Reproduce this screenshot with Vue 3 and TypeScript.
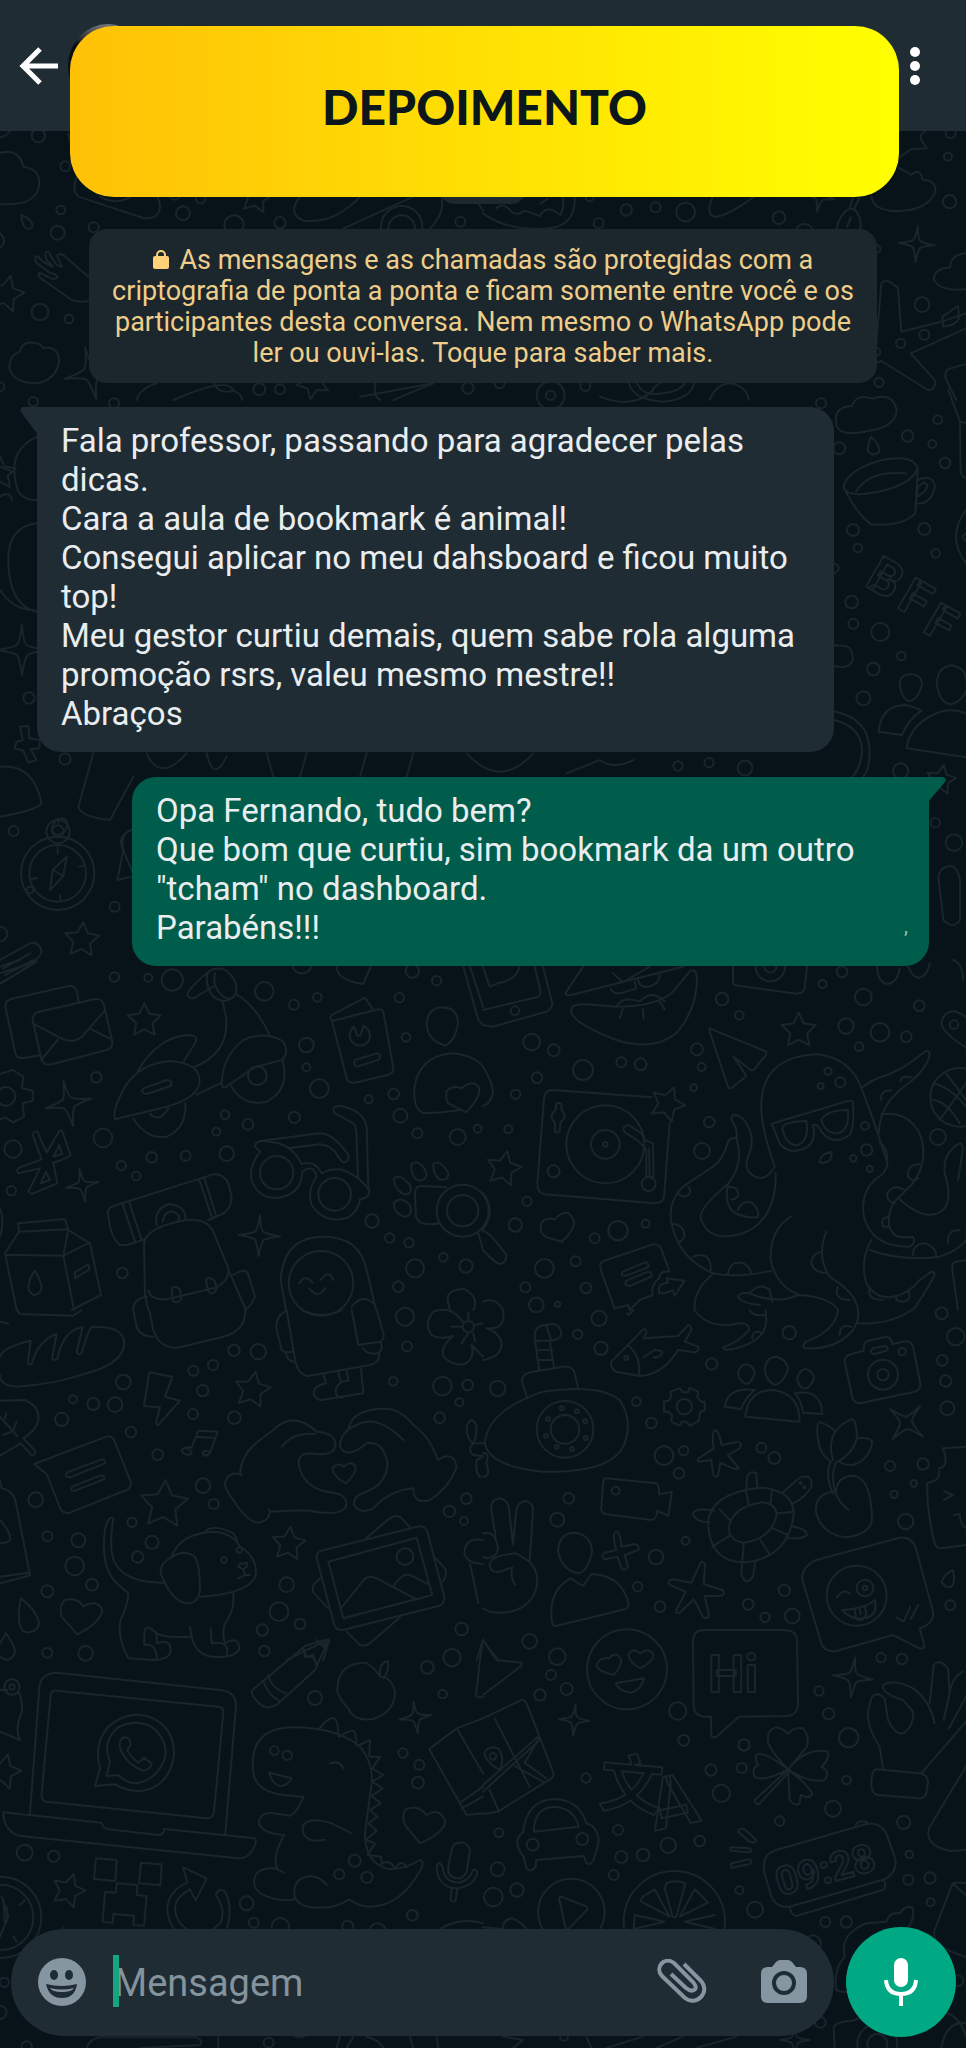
<script setup lang="ts">
import { ref } from 'vue'

type Dot = [x: number, y: number, r: number]
type Turned = [x: number, y: number, r: number, angle: number]
type Word = { t: string; x: number; y: number; size: number; turn: number }

interface Tile {
  x: number
  y: number
  dots: Dot[]
  stars: Turned[]
  sparks: Turned[]
  paths: string[]
  words: Word[]
}

const draft = ref('')

const incoming = [
  'Fala professor, passando para agradecer pelas dicas.',
  'Cara a aula de bookmark é animal!',
  'Consegui aplicar no meu dahsboard e ficou muito top!',
  'Meu gestor curtiu demais, quem sabe rola alguma promoção rsrs, valeu mesmo mestre!!',
  'Abraços',
]

const outgoing = [
  'Opa Fernando, tudo bem?',
  'Que bom que curtiu, sim bookmark da um outro "tcham" no dashboard.',
  'Parabéns!!!',
]

const star = 'M0 -100L29 -40L95 -31L47 15L59 81L0 50L-59 81L-47 15L-95 -31L-29 -40Z'
const spark = 'M0 -100Q6 -20 22 -18Q40 -8 100 0Q36 10 22 20Q10 36 0 100Q-10 36 -20 20Q-36 8 -100 0Q-36 -10 -20 -20Q-8 -36 0 -100Z'

// Wallpaper tiles: each one is drawn in thirds of a page unit from its own corner.
const tiles: Tile[] = [
  {
    x: 0, y: 0,
    dots: [[115, 407, 20], [196, 499, 15], [182, 630, 13], [173, 698, 21], [281, 682, 15], [549, 640, 21], [702, 675, 29], [840, 668, 17], [1381, 665, 15], [120, 936, 25], [207, 957, 13], [778, 1168, 18], [840, 1168, 15], [1404, 1164, 17], [0, 1160, 13], [1205, 680, 62], [1205, 686, 40], [602, 596, 14], [525, 585, 14]],
    stars: [[768, 592, 50, 10], [18, 882, 56, 14], [940, 1148, 50, 190]],
    sparks: [[272, 1120, 80, -12]],
    paths: [
      'M0 612Q118 620 118 545Q115 505 70 500Q60 455 20 455L0 458', 'M0 412Q22 408 30 392',
      'M250 500Q205 560 235 590L430 654Q480 660 480 615Q470 560 420 530Z', 'M300 590Q350 620 400 585',
      'M64 645Q100 660 97 680Q85 695 72 678Q66 668 64 645Z', 'M0 700Q25 725 0 742',
      'M265 830L190 765Q170 758 172 772L186 800Q170 805 146 755Q130 750 140 780L160 800Q130 790 112 768Q100 770 110 790L150 818Q190 830 160 838L118 818Q110 830 130 840L215 900Q240 908 265 903',
      'M60 1055Q65 1025 98 1028Q125 1030 130 1045Q170 1035 178 1080Q170 1140 110 1150Q40 1150 28 1105Q28 1065 60 1055Z',
      'M900 590Q860 640 910 662Q960 668 1010 645Q1060 615 1080 590', 'M1030 686L1240 590', 'M1290 686Q1335 640 1325 590',
      'M410 1200Q420 1165 470 1150M640 1150Q660 1185 700 1172Q725 1180 726 1200', 'M1125 1150Q1120 1190 1140 1200M1180 1200L1300 1150',
      'M205 400Q208 420 211 428', 'M1435 610L1449 632',
    ],
    words: [],
  },
  {
    x: 483, y: 0,
    dots: [[1403, 400, 15], [1395, 470, 12], [1400, 605, 20], [430, 630, 17], [518, 622, 15], [608, 636, 28], [347, 670, 15], [888, 653, 19], [964, 700, 28], [1317, 914, 22], [1324, 1004, 15], [1253, 1030, 14], [1188, 1147, 14], [1014, 1210, 15], [307, 1158, 15], [203, 1186, 42], [203, 1186, 14], [50, 1150, 15], [320, 592, 12], [1180, 747, 12], [1180, 1055, 12]],
    stars: [],
    sparks: [[1301, 732, 54, 4], [1010, 590, 46, 10]],
    paths: [
      'M1325 395Q1305 405 1318 425L1332 445L1283 448L1250 472M1250 505Q1280 520 1285 525Q1310 500 1320 540Q1360 540 1357 575Q1330 640 1220 632Q1170 625 1165 590',
      'M0 640Q70 690 170 686Q280 690 275 590', 'M40 625Q60 605 82 632Q100 650 125 632Q150 640 170 648Q190 610 232 645Q245 620 240 592M172 610L195 596',
      'M690 590Q665 640 695 650Q730 650 810 592', 'M1060 690Q1070 640 1100 625Q1135 630 1133 690M1092 680L1104 652M1115 625L1130 590M1100 625L1110 590',
      'M1195 850Q1210 830 1245 865L1255 995L1385 962L1449 940M1195 850L1180 1030M1449 985L1283 1060L1355 1140Q1360 1170 1335 1170L1195 1083L1180 1088',
      'M1380 980L1378 950L1425 918L1428 955Q1420 975 1380 980Z', 'M1449 760Q1400 765 1402 802Q1355 805 1352 838Q1370 875 1449 868',
      'M1449 1092L1400 1106Q1380 1115 1390 1140L1420 1200', 'M438 1150Q450 1200 540 1205Q620 1200 634 1150M462 1150Q480 1190 540 1180Q590 1175 606 1150M510 1165L530 1150',
      'M680 1200Q700 1150 745 1150Q790 1160 798 1200',
    ],
    words: [],
  },
  {
    x: 826, y: 390,
    dots: [[335, 89, 13], [245, 138, 17], [319, 162, 12], [357, 219, 16], [40, 175, 18], [81, 420, 18], [96, 474, 13], [295, 417, 18], [329, 490, 13], [77, 636, 19], [82, 701, 15], [163, 726, 27], [226, 798, 13], [142, 837, 19], [112, 925, 21], [224, 1143, 23], [24, 535, 14]],
    stars: [[345, 1170, 46, 10]],
    sparks: [],
    paths: [
      'M30 95Q25 50 78 48Q90 10 140 26Q200 5 212 60Q210 110 130 122Q30 145 30 95Z', 'M135 140Q165 165 158 188Q140 200 126 184Q124 165 135 140Z',
      'M52 290Q65 240 160 212Q260 190 275 235Q255 290 130 310Q60 320 52 290ZM52 290Q90 370 135 403Q230 410 268 370L275 235M90 304Q130 240 240 250M275 270Q320 250 327 290Q315 345 270 340M275 320Q265 290 295 278Q320 290 275 320',
      'M367 0L402 95L420 98M402 95L404 240Q405 260 420 265', 'M420 360Q360 440 420 520M420 430Q400 440 420 452',
      'M222 890Q218 855 252 852Q290 855 288 885Q275 930 250 933Q230 930 222 890Z', 'M332 880Q335 830 378 826Q420 835 420 870M332 880Q340 940 375 943Q405 935 420 905',
      'M158 1025Q165 945 240 945Q275 955 286 962Q245 990 228 1035ZM420 970Q370 950 320 975Q250 1010 242 1075L420 1102',
      'M24 766L60 768Q80 775 81 808Q70 840 24 828', 'M24 964Q130 985 131 1085Q130 1140 112 1160M24 990Q108 1010 108 1085Q105 1130 80 1160',
    ],
    words: [
      { t: 'B', x: 112, y: 585, size: 150, turn: 30 },
      { t: 'F', x: 208, y: 650, size: 150, turn: 30 },
      { t: 'F', x: 286, y: 722, size: 145, turn: 30 },
    ],
  },
  {
    x: 0, y: 390,
    dots: [[87, 924, 17], [195, 1107, 17], [342, 40, 15], [100, 35, 14], [90, 1500, 10]],
    stars: [[0, 250, 50, 0]],
    sparks: [[66, 780, 75, 0]],
    paths: [
      'M112 140Q20 180 50 290Q60 330 112 330M0 230L38 245M0 320Q30 300 36 330', 'M112 400Q20 410 25 520Q30 650 112 665M0 600Q40 660 100 660',
      'M60 1010L85 1008L88 1045L120 1050L118 1075L92 1078L110 1110L85 1118L70 1082L44 1075L50 1055L68 1050Z',
      'M0 1130Q100 1120 125 1240Q110 1260 0 1280', 'M280 1090L235 1250Q240 1280 330 1290L400 1160',
      'M440 1090Q480 1180 560 1090M620 1090Q640 1180 680 1100M800 1090L820 1160M920 1090L900 1160M1100 1090L1080 1160M1240 1090L1220 1160M1400 1090Q1500 1200 1600 1090M1700 1150L1800 1110Q1840 1140 1900 1110',
      'M700 0Q680 -40 520 30M1080 20L1300 -20M1800 20Q1900 60 1960 0',
      'M420 1500L365 1370Q350 1330 420 1310', 'M175 1300Q175 1285 190 1285Q215 1300 190 1328Q165 1345 155 1320Q160 1295 175 1285',
    ],
    words: [],
  },
  {
    x: 0, y: 760,
    dots: [[41, 213, 15], [344, 440, 15], [0, 522, 22], [173, 340, 110], [173, 340, 85], [174, 215, 35], [174, 213, 17], [2034, 18, 14], [2127, 8, 14], [2235, 24, 22], [2862, 248, 25], [2806, 188, 14]],
    stars: [[246, 540, 54, 4]],
    sparks: [],
    paths: [
      'M200 290L190 348L150 390L158 330ZM158 330L190 348M173 262L173 280M90 358L112 354M238 320L255 316M180 405L182 420',
      'M0 600L90 550Q120 545 125 575Q120 600 20 660L0 670M10 625L90 580M15 645L100 600', 'M395 210Q360 220 370 270L352 360L395 350',
      'M2840 320Q2870 310 2880 360L2880 480Q2860 510 2830 480L2815 350Q2820 325 2840 320Z',
    ],
    words: [],
  },
  {
    x: 0, y: 960,
    dots: [[343, 51, 14], [445, 53, 12], [517, 60, 32], [793, 94, 28], [882, 134, 15], [952, 112, 13], [906, 10, 30], [919, 255, 22], [919, 322, 12], [958, 386, 28], [1106, 418, 12], [1181, 402, 16], [1201, 467, 21], [1252, 520, 15], [1373, 531, 24], [1433, 506, 12], [1198, 113, 14], [1218, 232, 13], [1237, 33, 20], [1310, 62, 14], [289, 352, 16], [309, 534, 28], [39, 567, 26], [455, 592, 16], [364, 617, 14], [409, 648, 13], [557, 587, 15], [680, 581, 22], [649, 515, 12], [675, 464, 13], [744, 493, 16], [883, 472, 17], [34, 692, 14], [367, 939, 16], [1116, 783, 20], [1169, 834, 14], [1227, 848, 14], [1245, 925, 27], [1330, 892, 13], [1398, 918, 20], [1195, 980, 16], [18, 409, 28], [772, 347, 28], [830, 638, 50], [1004, 703, 49], [1388, 752, 78], [1388, 752, 47], [963, 970, 97]],
    stars: [[433, 182, 52, 0]],
    sparks: [[205, 430, 70, -12], [247, 675, 50, -10], [778, 827, 62, 2]],
    paths: [
      'M118 286L72 294Q50 296 46 280L16 140Q16 122 34 117L205 78Q225 75 231 96L236 124', 'M98 180Q98 160 115 156L285 117Q307 115 312 135L337 245Q338 265 320 270L150 314Q128 315 124 296ZM98 190L190 238Q225 250 248 228L314 152M124 300L174 238M270 206L334 238',
      'M0 342L38 330L70 350L66 385L98 392L98 422L68 430L72 470L40 487L15 472L0 478',
      'M412 335Q470 235 560 225Q600 225 585 250L550 305M345 478Q335 450 375 380Q420 310 510 303Q605 310 598 370Q590 415 500 440ZM430 385L500 360Q520 360 512 378L440 402Q420 400 430 385ZM400 475Q440 540 500 530Q560 505 556 430M450 462Q480 490 505 445M590 404L665 368M580 322Q690 280 678 170L668 125M708 102Q770 140 807 222M665 375Q665 290 730 240Q800 210 850 245Q870 280 845 300L790 315Q760 320 730 345L680 380Q668 385 665 375ZM695 380Q730 440 800 425Q870 390 848 302M625 35Q560 90 562 105Q575 125 600 103L640 80M625 35Q610 70 640 110Q680 140 708 100Q715 60 680 32Q650 18 625 35ZM645 40Q635 80 670 110Q690 122 700 112',
      'M995 165L1095 113L1116 145M995 165Q985 180 1000 182L1135 148Q1145 146 1150 155L1180 325Q1180 340 1165 344L1065 368Q1045 370 1040 355L995 180M1062 200Q1040 220 1055 245Q1080 268 1105 245Q1120 215 1090 197L1082 225L1072 228ZM1065 300L1130 280Q1142 280 1140 292L1135 300L1070 320Q1058 315 1065 300Z',
      'M1280 190Q1285 142 1328 142Q1375 145 1374 190Q1365 245 1335 257Q1280 240 1280 190Z', 'M1380 450Q1300 462 1270 458Q1240 450 1243 385Q1255 290 1355 280Q1420 285 1449 320M1385 385Q1360 375 1340 392Q1335 415 1345 430L1398 457Q1440 415 1438 385Q1420 355 1385 385',
      'M112 515L140 578L178 512L186 512L212 585Q205 595 160 608L172 670L95 702L85 695L120 625L55 640Q45 630 60 622L125 598L98 525Q100 512 112 515ZM178 555L160 590L186 582ZM138 635L122 670L150 660Z',
      'M325 765Q320 745 340 738L640 643Q670 640 685 670L695 710Q695 750 660 765L625 780M325 765Q330 830 360 855L380 855L435 838M367 730L405 845M387 725L425 840M597 656L635 770M612 652L648 765M470 795Q460 745 510 732Q560 740 556 780M488 785Q495 750 520 755Q545 765 535 780',
      'M435 1005L432 850Q440 800 560 780Q620 775 640 815L685 925Q690 965 640 985L500 1018Q450 1020 445 990M435 1005L445 1050M690 940L738 1050M700 945Q740 920 745 945L765 1010Q750 1045 738 1045M400 1050Q400 1015 440 1010M515 985Q530 975 540 990L545 1015Q535 1035 518 1022ZM618 960Q630 945 645 965L650 985Q640 1010 625 995Z',
      'M765 560Q765 545 785 542L960 520Q1000 520 1045 585Q1050 605 1030 607Q1020 600 1005 575Q985 555 960 553L865 565M765 560L780 575Q740 630 758 670Q780 715 830 714Q905 705 907 635Q940 610 950 650Q920 690 935 735Q970 790 1040 775Q1075 755 1080 718Q1110 715 1108 690Q1070 640 1020 628Q990 625 965 640Q945 600 905 612Q880 560 830 548L785 542M1105 690L1100 500Q1090 450 1020 437Q990 440 1005 460L1060 490Q1070 500 1070 540L1074 650',
      'M1235 612Q1260 595 1280 640Q1280 665 1250 660Q1230 640 1235 612ZM1300 612Q1320 595 1345 640Q1345 665 1318 658Q1298 640 1300 612ZM1182 655Q1200 640 1230 675Q1240 705 1212 703Q1180 685 1182 655ZM1182 730Q1200 705 1230 735Q1240 770 1212 770Q1180 760 1182 730ZM1245 700Q1245 675 1270 678L1340 682M1245 700L1248 770Q1255 800 1320 790M1435 820L1449 870',
      'M15 880L57 815L54 790L195 777L205 810L270 850L303 1005L215 1050M15 880L50 1050M15 884L190 887L222 1050M57 815L205 808L190 887L265 850M104 932Q85 960 85 985Q92 1005 104 1005Q125 1000 125 980Q120 955 104 932ZM225 937L265 912L268 928L225 955Z',
      'M858 1050L842 960Q850 830 970 830Q1080 830 1100 930L1128 1050M898 970Q915 940 938 968M962 960Q985 925 1000 960M928 985Q955 1020 975 985M1055 1040Q1085 1000 1120 1030',
      'M0 745Q15 780 0 830', 'M1420 1050Q1440 1010 1390 986Q1340 990 1343 1020L1350 1050', 'M0 20L60 0M0 40L90 10M0 72L110 5',
      'M1010 20Q1010 60 1090 72L1112 20M1390 20L1435 180L1449 195M1410 20L1449 140',
    ],
    words: [],
  },
  {
    x: 483, y: 960,
    dots: [[96, 152, 13], [146, 246, 25], [212, 271, 18], [162, 353, 16], [98, 403, 14], [300, 330, 30], [415, 307, 15], [473, 313, 18], [76, 508, 12], [717, 117, 19], [769, 166, 13], [642, 268, 18], [656, 321, 12], [632, 383, 10], [679, 486, 16], [657, 573, 24], [1077, 35, 16], [1019, 72, 12], [1141, 111, 25], [1309, 137, 16], [1089, 198, 23], [1191, 217, 28], [1270, 230, 16], [1128, 260, 13], [1035, 334, 11], [1072, 367, 15], [1013, 378, 9], [1146, 497, 12], [1151, 570, 17], [1111, 595, 10], [1160, 627, 9], [1365, 531, 24], [132, 724, 14], [97, 795, 20], [405, 812, 29], [335, 835, 15], [488, 791, 12], [278, 904, 15], [184, 925, 28], [127, 982, 15], [309, 984, 16], [160, 1035, 22], [224, 1033, 8], [367, 553, 117], [367, 553, 43], [367, 553, 7], [212, 634, 18], [497, 672, 21], [1430, 412, 88], [1413, 194, 13], [862, 20, 44], [862, 20, 18]],
    stars: [[947, 212, 54, 0], [553, 432, 54, 22], [62, 626, 54, 12]],
    sparks: [],
    paths: [
      'M0 20L20 80L45 70Q100 60 110 20M0 150L160 112Q175 108 172 90L155 20M180 20L208 130Q205 150 190 155L30 200L0 195',
      'M300 20L247 100Q250 108 265 105L600 20M390 40L420 66L500 20M383 85Q390 105 420 98L460 85L455 65M465 60Q470 85 500 80Q530 70 530 45',
      'M265 155Q260 130 310 133L400 140Q520 140 570 95L620 35Q640 20 642 60Q640 150 580 220Q510 275 400 240Q270 190 265 155ZM400 140Q420 105 470 125Q510 85 545 125M420 147L410 175M480 148L482 175M530 125L545 148',
      'M750 20L750 70Q750 75 770 78L930 100Q960 105 965 85L972 20M1182 20Q1185 70 1215 72Q1245 65 1250 25M1275 20Q1290 55 1310 53Q1335 45 1340 10M1410 0Q1440 10 1440 60',
      'M680 205L850 275Q852 280 848 286L812 330Q805 333 800 328L752 290L790 348L745 385Q738 387 735 380L680 215Z',
      'M505 412L210 390Q185 390 183 415L163 670Q163 700 185 703L515 730Q540 730 543 710L560 490M220 432Q228 425 235 432L236 450Q255 470 232 487L230 515Q222 520 216 515L216 487Q195 470 218 450ZM425 500Q435 492 445 500L475 520L485 540L510 550L512 650L490 652L490 568L465 542L430 520Q415 510 425 500ZM498 565L500 650',
      'M875 620Q830 490 835 430Q840 290 1000 283Q1090 290 1130 370Q1180 500 1213 610Q1210 640 1180 655Q1130 700 1143 770Q1165 860 1280 860Q1300 850 1290 830Q1260 835 1240 828Q1200 800 1230 730L1290 670Q1340 600 1310 520Q1270 450 1195 463',
      'M1135 385Q1160 360 1220 342Q1270 320 1325 275Q1340 268 1340 285Q1330 330 1270 375Q1190 430 1187 520M1190 550Q1215 560 1213 610M1195 420Q1190 390 1225 392M1252 365Q1255 345 1285 352',
      'M870 490Q860 490 870 500L890 550Q920 590 975 560Q1000 540 990 495Q1005 490 1015 515Q1050 560 1100 525Q1115 500 1110 430Q1110 420 1098 422ZM898 505Q900 485 970 483Q980 540 945 555Q910 560 898 505ZM1015 480Q1030 450 1095 450Q1100 510 1065 520Q1025 520 1015 480ZM1045 575Q1015 580 1008 605Q1025 615 1040 600Q1048 590 1045 575Z',
      'M875 620Q850 665 815 650Q780 630 795 590Q820 540 790 490Q770 460 750 465Q738 475 755 495Q765 520 760 535M760 535Q745 530 735 545Q720 600 690 620L600 680Q560 720 563 770Q575 890 690 940Q760 955 865 932M760 535Q785 610 735 672Q640 750 655 780Q680 850 780 820Q880 780 878 640M735 672Q720 750 770 765Q800 775 825 772M735 680Q770 680 765 710Q755 720 745 718M765 750Q775 720 805 728Q830 745 825 772M585 700Q605 720 620 700Q625 690 615 680M565 792Q600 790 605 825Q600 845 585 845M630 890Q650 880 670 890Q685 905 683 932M735 942Q740 905 775 908Q800 915 805 940',
      'M923 770Q860 810 863 900Q880 980 950 1005M690 942Q630 990 635 1050M1030 815Q1000 890 1040 950Q1120 1000 1125 1050M1015 875Q985 885 985 910Q995 940 1030 938M765 1010Q770 995 800 1000Q880 1035 945 1005Q1040 1010 1065 1050M800 1000Q830 965 860 990L868 1025M765 1010Q775 1030 830 1035M1065 980Q1050 1020 1100 1020',
      'M1165 840Q1130 900 1150 970Q1180 1020 1230 1010Q1280 1000 1310 960L1345 935Q1360 935 1350 955Q1320 1010 1290 1050M1160 870Q1260 905 1370 890Q1430 870 1449 840M1250 718Q1330 790 1380 750Q1410 720 1385 640Q1380 590 1410 565Q1445 530 1438 580L1425 660M1290 885Q1290 850 1330 850Q1360 865 1360 888M1310 612Q1270 615 1275 650Q1290 670 1305 655M1265 690Q1230 670 1213 700Q1210 725 1235 730M1218 770Q1190 775 1200 800L1220 800M1395 850Q1390 810 1430 810M1160 985Q1150 1020 1200 1020M1275 990Q1290 1020 1260 1025Q1235 1025 1240 1010',
      'M1375 190Q1380 155 1415 153L1449 170M1375 190Q1380 220 1449 262M1350 370Q1400 380 1449 440M1345 420Q1390 420 1430 490M1370 480L1449 370M1390 340L1449 420',
      'M215 778Q180 770 173 795Q170 820 190 832L237 845Q275 810 273 785Q255 735 215 778Z',
      'M0 320Q30 370 30 395Q25 430 0 438M0 700Q40 750 0 810M0 815Q15 810 70 885Q70 910 50 912Q30 905 0 870',
      'M352 920Q350 905 370 900L510 853Q530 852 536 870L560 935Q530 930 528 955Q500 980 510 1005L470 1020L440 1050L435 1035L395 1045L355 935ZM420 935L485 907Q500 908 495 922L430 947Q410 948 420 935ZM430 962L495 935Q510 938 505 950L440 978Q420 975 430 962ZM528 985Q530 970 555 968L550 955L605 962L575 1008L570 990Q540 1005 528 998Z',
      'M1449 900L1420 905Q1405 908 1408 930L1425 1050', 'M0 1025Q40 1010 60 1050',
    ],
    words: [],
  },
  {
    x: 0, y: 1310,
    dots: [[370, 216, 22], [219, 268, 12], [280, 282, 18], [345, 284, 22], [185, 328, 20], [393, 366, 16], [473, 434, 16], [107, 569, 22], [702, 121, 17], [775, 125, 23], [639, 165, 15], [580, 182, 15], [608, 242, 17], [579, 312, 15], [703, 323, 19], [1215, 20, 27], [1221, 109, 15], [1180, 214, 13], [1327, 228, 28], [1403, 225, 16], [1378, 277, 12], [1319, 323, 16], [609, 527, 22], [641, 582, 15], [396, 637, 14], [142, 679, 15], [235, 691, 21], [224, 768, 28], [142, 844, 18], [276, 824, 18], [456, 697, 20], [413, 741, 17], [142, 1028, 15], [257, 1030, 22], [860, 824, 22], [837, 905, 28], [900, 942, 16], [787, 960, 17], [793, 1023, 16], [1348, 604, 17], [1399, 566, 16], [1392, 633, 12], [1385, 957, 19], [1356, 1043, 26], [1405, 50, 17], [672, 750, 8], [718, 720, 8], [1215, 740, 25]],
    stars: [[757, 240, 56, 10], [492, 584, 74, 4], [866, 702, 52, 6]],
    sparks: [],
    paths: [
      'M0 140Q10 110 92 92L84 155Q85 168 95 162Q115 90 170 72L156 145Q165 155 172 145Q190 60 248 52L230 125Q235 138 245 130Q265 60 275 52Q370 45 373 100Q370 160 260 190Q150 225 50 230Q0 228 0 195',
      'M50 0L60 12L220 17L245 0M0 35L25 40M400 0L410 50Q420 80 460 80M448 0L460 60Q480 120 540 112L670 80Q740 60 735 0',
      'M860 0L885 150Q895 195 925 198L1110 165Q1140 160 1138 125M855 5Q825 20 830 60L845 120Q855 130 875 125M858 130Q860 150 880 155M905 0Q970 30 1025 0M1055 0L1075 105L1140 95Q1155 85 1150 70L1130 0M1090 115Q1100 135 1135 130Q1150 120 1143 97M970 190L978 220Q935 230 942 255Q950 270 965 270L1090 250L1083 178M1015 183L1022 215L1045 212L1040 183M1022 218Q1000 235 1010 255Q1020 265 1030 262',
      'M1370 15Q1340 -10 1300 5Q1270 40 1295 75Q1320 90 1360 78Q1320 110 1330 140Q1360 170 1395 162Q1425 145 1415 105L1449 140M1355 50L1385 50M1405 10L1405 30M1372 18L1390 36M1405 70L1385 100M1420 70L1425 95M1425 45L1449 40',
      'M448 187L517 200L495 260L540 272L475 345Q465 345 470 330L480 292L432 288Z', 'M0 272L75 270Q120 290 115 330Q110 360 70 385L105 422Q108 438 95 435L62 400L0 437M0 320L52 378M15 325L18 310M40 360L50 335M10 375L35 365',
      'M560 415Q575 420 575 430Q560 440 545 425Q545 410 575 412L595 362L653 365L630 430Q610 445 608 428Q615 418 630 425M588 380L646 384',
      'M102 462L320 380Q335 375 342 390L392 515Q395 535 380 540L210 608Q190 612 182 598L140 492ZM200 488L305 448Q318 448 315 460L210 502Q192 502 200 488ZM217 530L302 496Q318 498 312 508L222 543Q208 542 217 530Z',
      'M720 490Q725 430 780 390L820 360Q880 300 950 365Q1010 370 1006 410Q1000 440 930 430Q885 430 900 480Q920 540 1000 548Q1045 555 1038 590Q1020 620 930 602Q880 600 810 605Q805 635 775 638Q740 635 700 570Q670 530 675 515Q690 480 725 495M845 410Q880 365 945 372M810 605L807 598',
      'M1045 355Q1060 295 1155 296Q1200 295 1240 345Q1290 380 1313 450Q1360 420 1370 470Q1350 530 1290 570Q1240 585 1240 535Q1170 540 1120 595Q1080 615 1062 585Q1060 555 1100 545Q1160 520 1163 460Q1150 390 1100 400Q1040 450 1020 410Q1020 365 1070 345Q1130 310 1210 390',
      'M1032 470Q1010 455 997 475Q1000 500 1038 520Q1070 490 1067 468Q1050 450 1032 470Z',
      'M340 625Q325 615 315 660Q300 770 350 820L385 850Q385 880 362 930Q350 980 385 1045L460 1050M340 625Q325 720 345 760Q380 820 490 818M515 740Q540 670 640 665Q700 670 720 710Q770 740 768 790Q760 850 600 860M615 665Q640 640 700 670Q710 685 710 690M510 745Q550 715 585 740Q600 770 600 830Q600 880 560 880Q515 875 482 790Q480 760 510 745M700 850Q705 900 675 940Q665 970 675 1000Q720 975 717 1020Q700 1040 670 1040Q590 1050 575 980Q500 985 470 970Q430 930 433 980L433 1005Q470 1000 470 1045M470 970L470 1000Q520 985 510 1030Q500 1050 460 1050M570 950L575 980M632 955L635 1000Q690 990 680 1035M715 770Q720 755 732 762Q745 750 740 770L730 778ZM730 778L735 795L715 805M735 795L750 795',
      'M250 890Q235 860 195 870Q175 885 185 920L232 973Q300 940 307 900Q290 865 250 890Z', 'M62 865Q110 900 118 940Q110 970 80 967Q45 960 62 865ZM18 970Q40 1000 45 1020Q45 1045 20 1050L0 1040M18 970L0 1000',
      'M0 510L5 535Q40 540 48 580L90 795Q80 800 0 820M0 800L85 788M0 630Q35 670 30 690Q20 700 0 700',
      'M1100 683L1165 628Q1190 610 1205 625L1228 650M1308 745L1338 780Q1340 800 1328 815M960 805L940 825Q935 840 942 850L985 895M1040 965L1080 1005Q1095 1010 1110 1000L1200 922M950 745Q948 728 965 722L1250 650Q1275 645 1282 665L1333 860Q1333 885 1315 888L1030 960Q1010 962 1003 945ZM985 755L1250 683L1297 855L1030 925ZM1027 890L1095 805Q1110 795 1130 805L1250 868M1180 830Q1210 780 1240 800L1283 822',
      'M860 1050L985 988Q990 990 985 1000L970 1050M910 1015L920 1040L940 1035L945 1050M960 1000L975 1015L982 1000',
      'M1400 350Q1415 310 1430 350Q1430 380 1420 400Q1400 390 1400 350M1420 400Q1400 420 1420 435L1449 438M1449 440L1430 450Q1425 490 1440 500M1449 690Q1395 680 1393 730Q1400 760 1449 762M1410 762L1425 830L1435 880M1449 400L1425 400M1449 990L1430 1050',
    ],
    words: [],
  },
  {
    x: 483, y: 1310,
    dots: [[348, 25, 23], [284, 73, 14], [354, 115, 20], [44, 235, 23], [460, 275, 13], [505, 339, 16], [543, 437, 28], [602, 422, 14], [588, 490, 16], [257, 565, 16], [223, 629, 21], [686, 162, 17], [919, 68, 20], [1376, 10, 18], [1418, 80, 26], [1378, 151, 16], [1388, 213, 17], [1393, 295, 21], [835, 413, 15], [874, 444, 18], [1221, 468, 15], [1320, 462, 17], [1292, 520, 10], [1233, 553, 11], [1268, 634, 23], [608, 692, 12], [519, 741, 22], [464, 830, 14], [531, 890, 16], [796, 883, 16], [846, 922, 14], [904, 841, 17], [928, 918, 22], [1402, 886, 15], [140, 994, 22], [223, 1040, 25], [246, 358, 85], [246, 358, 43], [236, 295, 6], [281, 304, 6], [307, 334, 6], [308, 384, 6], [267, 417, 6], [221, 410, 6], [189, 377, 6], [195, 328, 6], [604, 290, 23], [430, 144, 6], [398, 542, 12], [1200, 194, 45], [1200, 194, 17], [1258, 125, 11], [1121, 857, 90], [1146, 834, 25], [1146, 834, 7], [953, 520, 3], [964, 532, 3]],
    stars: [],
    sparks: [[1270, 338, 64, 40]],
    paths: [
      'M5 400Q15 300 180 245Q350 220 410 270Q450 330 425 400Q390 490 180 485Q20 470 5 400ZM133 265L117 215Q115 195 140 187L240 170Q270 168 275 190L285 232M168 180L155 80Q155 45 190 45L210 42Q230 42 235 70Q232 85 215 90L200 92L213 172M190 48L205 92M160 92L200 92M163 120L207 120M168 150L210 150M0 430Q20 425 10 460Q25 500 0 500',
      'M0 150Q60 140 55 95Q40 60 10 55Q70 60 60 0M432 10L437 15L450 0M635 0Q670 50 740 45Q800 30 798 60Q770 95 720 112Q720 125 760 115Q850 90 850 30L848 0M808 85Q810 55 840 70M800 0Q810 20 845 15M1065 0Q1060 60 970 95Q955 105 965 115Q1060 120 1110 60Q1130 30 1125 0M1125 40Q1220 45 1285 0M1070 75Q1070 40 1105 50',
      'M385 155L435 105L480 58Q490 55 490 68L482 85L585 78L615 45Q625 45 625 60L605 95L645 110Q650 125 635 127L585 120Q540 195 470 198L400 185Q380 175 385 155ZM435 105Q475 140 468 195M482 142L515 120Q540 120 538 130Q525 145 512 142',
      'M590 235L600 247L615 247L620 233L645 245L643 262L655 275L665 275L665 300L650 308L650 322L645 335L620 347L610 335L598 335L590 347L565 335L567 315L555 305L543 305L543 275L560 270L565 255L562 245Z',
      'M765 190Q770 165 790 163Q815 170 815 190Q805 220 790 222Q770 215 765 190ZM845 180Q850 140 880 140Q915 150 915 180Q900 220 877 225Q850 215 845 180ZM943 205Q950 178 968 176Q992 185 993 207Q980 235 965 236Q945 230 943 205ZM725 290Q735 230 815 240Q785 265 775 297ZM787 320Q795 240 870 240Q950 250 950 335ZM935 250Q1015 235 1018 312L960 308Q955 270 935 250Z',
      'M1085 155Q1085 138 1105 132L1142 122Q1140 95 1155 92L1210 80Q1225 82 1228 103L1265 94Q1285 92 1290 110L1313 225Q1310 240 1295 245L1130 280Q1112 280 1108 262ZM1170 115L1205 107Q1220 112 1210 122L1175 132Q1155 128 1170 115Z',
      'M697 360Q710 365 715 405L765 395Q780 400 770 415L735 435L768 475Q765 480 750 475L712 458L705 498Q695 505 690 490L685 450L645 455Q640 448 655 440L692 415Q685 365 697 360Z',
      'M655 755Q670 755 665 780L662 822L718 840Q730 850 715 857L665 858L678 915Q675 930 660 920L632 868L590 908Q578 912 580 900L608 845L560 825Q550 812 570 808L625 818Z',
      'M370 505L520 520Q530 525 528 553L567 545L556 617L523 603Q520 630 505 630L365 612Q352 605 355 590L360 520Q362 505 370 505Z',
      'M675 640Q680 550 830 533Q930 540 932 610Q920 740 790 757Q680 760 675 640ZM738 650Q750 590 840 577Q885 585 880 620Q860 690 780 698Q735 690 738 650ZM790 550L798 585M868 538L862 580M885 610L930 605M870 655L915 675M832 690L858 730M782 702L778 755M740 677L688 710M740 630L710 598M790 548L792 500Q800 480 820 490L823 535M900 547L950 503Q990 490 985 530Q970 560 928 582M695 602Q640 590 630 610Q635 635 680 637M930 650Q970 655 972 675Q955 690 908 683M778 757L775 795Q790 830 810 800L817 755',
      'M1045 455Q1000 430 1003 350Q1005 330 1020 340Q1045 350 1057 365Q1075 340 1105 328Q1120 325 1122 385Q1160 380 1168 395Q1160 450 1110 465Q1080 465 1070 455M1057 365Q1035 400 1050 450M1122 385Q1110 430 1065 455M1042 455Q1025 500 1050 550M1060 455Q1040 500 1060 555Q1075 585 1097 600M1050 545Q1000 550 998 600Q1010 670 1085 682Q1160 675 1167 630Q1165 500 1110 497Q1060 500 1060 545',
      'M25 600Q20 570 50 565Q75 570 78 595L90 703L100 600Q105 575 130 573Q150 580 150 600L140 755M25 600L38 680M0 670Q40 660 45 720Q35 750 0 742M140 755Q180 800 150 860Q110 920 20 905L0 895M20 760Q30 735 100 730L140 755M20 760Q20 790 50 785L88 772Q80 800 97 825',
      'M225 720Q230 668 275 668Q325 675 327 725Q315 785 285 790Q235 780 225 720ZM205 920Q200 840 262 805L300 828L325 792Q415 795 437 880Q437 895 425 898L220 948Q205 948 205 920Z',
      'M400 665Q412 665 415 710L455 702Q470 705 466 720L425 735L435 770Q425 785 415 775L403 740L365 748Q350 740 365 728L400 720Q385 670 400 665Z',
      'M958 810Q955 770 1000 750L1250 683Q1290 680 1300 720L1350 905Q1355 940 1310 955L1325 1010Q1320 1018 1310 1015L1230 975L1060 1023Q1025 1028 1015 1000ZM1062 862Q1080 835 1100 850M1078 900Q1150 895 1175 870Q1190 930 1120 925Q1095 920 1078 900M1115 900L1120 925Q1140 940 1150 910L1145 890M1130 895L1133 912M1240 922L1262 935L1282 890M1283 927L1306 885',
      'M1449 410L1380 415Q1400 470 1368 475Q1375 515 1333 518Q1330 600 1355 700Q1360 718 1380 714L1449 705M1383 543L1410 555L1383 570M1412 615L1430 612Q1430 640 1449 655', 'M1410 780Q1385 790 1376 815Q1385 835 1405 830Q1418 820 1410 780Z', 'M0 990L45 1050',
    ],
    words: [],
  },
  {
    x: 0, y: 1640,
    dots: [[945, 174, 21], [1282, 82, 19], [1328, 162, 13], [1209, 339, 14], [1258, 374, 15], [1254, 428, 18], [74, 638, 24], [161, 649, 17], [740, 790, 21], [761, 848, 15], [841, 860, 26], [1237, 826, 16], [1043, 858, 16], [1133, 875, 25], [1064, 662, 18], [1018, 703, 15], [1101, 712, 17], [13, 1027, 14], [0, 1117, 20], [80, 1220, 16], [806, 1208, 15], [36, 141, 23], [36, 141, 8], [823, 332, 13], [862, 346, 14], [2, 832, 122], [2, 832, 98]],
    stars: [[205, 752, 52, 18], [10, 395, 54, 15]],
    sparks: [[1247, 232, 48, -8], [190, 905, 42, 0]],
    paths: [
      'M90 520L118 145Q120 100 170 98L660 150Q710 155 708 200L676 580M125 460L152 165Q155 150 170 152L655 200Q672 203 670 218L642 515Q640 535 620 535L140 485Q122 482 125 460ZM10 517L305 548Q310 565 325 568L475 585Q490 585 493 567L765 595Q770 600 765 615Q750 655 715 655L55 587Q10 570 10 517Z',
      'M285 438L300 385Q280 310 325 260Q390 205 460 235Q525 270 522 345Q510 430 440 450Q390 460 345 433ZM320 408L330 365Q305 310 350 265Q400 235 455 260Q505 300 495 355Q470 420 410 430Q380 430 355 405ZM375 292Q355 295 360 325Q380 375 430 392Q450 390 455 370L432 353L415 368Q390 350 382 330L392 315Q390 292 375 292Z',
      'M755 160Q755 150 765 143L915 18L975 0M755 160Q775 200 805 203L830 195L945 90L985 0M790 122Q800 160 838 183M805 108Q815 145 858 160M910 25L915 50L940 52L950 75M950 0L970 20L975 5', 'M1085 68Q1010 75 1012 155Q1020 180 1045 205Q1060 245 1120 237Q1185 215 1185 155Q1175 110 1140 110Q1110 65 1085 68ZM1140 110Q1135 70 1163 62Q1170 90 1150 115',
      'M760 400Q745 280 850 263Q1000 255 1080 320Q1115 360 1116 420L1095 580Q1095 670 1165 687Q1210 690 1260 660Q1275 665 1262 690Q1200 800 1110 800Q1080 800 1047 778Q1010 805 950 803Q885 800 883 760Q880 715 930 708Q965 712 980 735M885 778Q850 785 820 775Q760 760 762 725Q765 680 825 685L852 698M832 685Q815 650 853 585Q780 580 776 545Q785 515 820 520L870 527Q895 515 910 470L850 465Q770 455 760 400M1055 580L990 548Q930 530 910 555Q900 595 945 602L975 600M808 398L875 415Q860 440 840 438Q815 430 808 398M990 370Q1020 360 1030 385',
      'M957 268Q980 235 1000 233Q1015 240 1015 290M1020 290Q1045 270 1062 273Q1072 290 1068 315M1072 318L1110 300L1108 345M1108 350L1142 350L1118 383M1116 385L1150 405L1116 425L1148 445L1114 468L1142 490L1110 510L1132 530L1105 550L1130 572L1098 600L1125 610L1103 645L1143 650L1145 670M1145 672Q1165 655 1185 685M1188 683Q1205 655 1220 682',
      'M1280 525Q1250 490 1215 510Q1205 530 1215 555L1260 610Q1330 580 1336 545Q1320 500 1280 525Z',
      'M1370 610Q1400 600 1410 630L1400 695Q1390 718 1370 715Q1340 710 1345 680L1355 630Q1360 612 1370 610ZM1320 670Q1305 670 1312 700Q1325 745 1370 745Q1420 740 1432 700Q1430 685 1420 690Q1405 725 1375 728Q1330 725 1328 680ZM1355 745L1352 780Q1360 792 1367 780L1372 745',
      'M288 655L350 660L346 723L282 717ZM423 668L485 673L481 736L417 730ZM350 730L412 735L410 765L440 768L432 857L400 855L402 827L340 822L338 848L308 846L315 756L347 758Z',
      'M549 682L620 715L587 782L570 748Q510 780 530 830Q540 855 560 867M549 682L562 728Q500 755 502 815Q508 850 522 867M647 765Q655 742 675 755Q700 800 680 867M647 765Q680 810 660 850L640 867',
      'M1449 235L1370 265L1290 325Q1287 330 1292 335L1400 525L1449 520M1370 265L1449 400M1378 490L1449 440M1385 505L1449 470', 'M1449 0L1440 60L1428 165Q1430 175 1449 170',
      'M0 150L22 150M55 155Q75 200 60 230Q45 270 60 300L0 275M5 770L25 830L0 890M60 795L75 780M40 890L50 905M10 780L15 850M20 800L22 840',
      'M1320 867Q1380 830 1449 850M260 1224Q270 1195 300 1192L590 1192Q610 1200 600 1215L420 1224M655 1190L655 1224M870 1180Q890 1200 920 1185M1010 1224L1020 1190M1040 1224L1060 1190M1100 1190Q1140 1200 1150 1224M1230 1190L1240 1224M1310 1190L1315 1224',
    ],
    words: [],
  },
  {
    x: 483, y: 1640,
    dots: [[204, 105, 15], [171, 165, 17], [251, 147, 18], [584, 213, 26], [602, 301, 16], [309, 414, 14], [405, 570, 15], [783, 315, 17], [776, 384, 15], [684, 390, 17], [715, 460, 26], [1008, 153, 14], [1037, 221, 17], [1194, 53, 14], [1257, 57, 16], [1097, 293, 29], [1091, 420, 13], [1050, 506, 24], [890, 543, 14], [1262, 547, 20], [1279, 643, 11], [47, 578, 13], [44, 688, 21], [415, 651, 18], [480, 645, 19], [556, 616, 23], [650, 603, 16], [392, 705, 15], [102, 750, 20], [31, 771, 28], [769, 751, 12], [816, 809, 24], [1276, 719, 15], [1341, 714, 17], [1343, 787, 12], [1027, 846, 15], [1090, 846, 17], [432, 88, 120], [149, 614, 18], [298, 597, 18], [265, 816, 100], [574, 845, 152], [30, 349, 10], [990, 910, 24], [1183, 1212, 60], [1183, 1212, 30], [1012, 1147, 16], [243, 1190, 12], [1425, 1022, 16]],
    stars: [],
    sparks: [[1110, 112, 60, 6], [274, 240, 46, 4], [935, 1200, 44, 0]],
    paths: [
      'M0 0L40 60L115 68Q120 72 112 80L0 165', 'M378 55Q350 50 341 75Q345 95 392 105Q415 80 415 60Q400 30 378 55ZM472 40Q445 20 437 45Q440 70 472 85Q510 65 512 45Q500 20 472 40ZM398 130L483 115Q475 150 445 158Q410 155 398 130Z',
      'M665 -30L900 -30Q940 -30 942 0L945 195Q942 225 915 228L768 230L700 290Q685 297 685 285L684 230L660 230Q632 225 632 195L630 0Q632 -30 665 -30Z',
      'M1200 385L1190 320Q1150 260 1155 215L1165 175Q1180 150 1205 175L1215 240Q1240 290 1265 278Q1295 250 1290 215L1260 180Q1195 160 1200 135Q1230 115 1290 145Q1340 180 1355 250M1340 190L1352 75Q1370 55 1395 85L1400 160L1382 240M1400 155Q1410 110 1440 95M1449 170L1398 265M1449 245L1315 400M1180 388L1310 400Q1335 405 1335 425L1330 460Q1325 478 1305 475L1185 465Q1165 460 1165 435Q1165 390 1180 388Z',
      'M1449 380L1340 560Q1320 615 1400 633L1449 630', 'M0 235L115 180Q125 178 130 188L212 400Q212 410 205 415L45 515L0 522M0 435L165 290L170 300L0 455M35 235L140 440M20 450L48 515M165 300L125 368L190 415M95 378L180 425M4 340Q15 315 45 325Q65 345 52 390Q10 370 4 340',
      'M855 305Q850 265 885 262Q905 270 915 282Q930 260 960 265Q980 285 972 320L915 388Q860 330 855 305ZM915 388Q840 330 820 345Q815 360 825 375Q805 385 815 412Q850 425 915 388ZM915 388Q970 320 1035 335Q1040 360 1015 380Q1045 395 1025 420Q975 430 915 388ZM915 388L920 480Q935 500 950 490Q950 475 955 465Q980 480 988 460Q970 430 915 388M908 395L815 480Q820 500 830 490L912 402',
      'M120 578Q130 480 215 477Q290 480 310 550Q345 560 347 605Q340 640 333 655Q325 680 310 668L302 648L160 660L158 680Q145 700 130 685L122 650Q100 625 103 600Q110 580 120 578ZM152 575Q155 500 215 500Q275 505 287 560Z',
      'M228 775Q232 768 240 772L312 800Q315 805 310 812L258 865Q250 868 247 860Z', 'M550 730Q575 718 607 730L580 830Q572 835 568 828L545 745ZM515 748L560 830L475 785Q470 780 480 770ZM635 748L590 830L675 788ZM455 825L545 845L452 867ZM695 825L605 845L698 867',
      'M765 575Q770 560 785 568L820 600Q815 612 800 605ZM742 622L800 625Q812 635 800 637L742 632ZM745 670L800 658Q810 665 800 672L745 684Z',
      'M845 660Q850 640 880 630L1150 552Q1190 545 1210 580L1238 660Q1240 700 1205 718L920 800Q880 805 865 770L842 690ZM920 803Q925 825 940 828L1200 750Q1212 740 1203 722M1118 557Q1120 545 1140 543Q1155 545 1152 550',
      'M0 862L60 867Q60 835 90 835Q120 850 130 867M1060 1050Q1050 990 1085 950Q1070 880 1150 850L1210 845Q1220 815 1250 820Q1270 790 1290 805Q1295 850 1265 870M1060 1050Q1100 1070 1120 1020M1409 730Q1440 760 1449 765M1409 730L1355 870Q1340 920 1449 950M1409 730Q1425 725 1449 730',
      'M1055 1224L1052 1160Q1060 1145 1110 1142L1140 1130M1360 1110Q1430 1120 1449 1190M1449 1150Q1390 1140 1375 1224M370 1224L480 1190M640 1224L760 1190M60 1190L120 1200L90 1224M310 1190L325 1224M520 1224L600 1190',
    ],
    words: [
      { t: 'Hi', x: 675, y: 155, size: 155, turn: 0 },
      { t: '文', x: 345, y: 495, size: 190, turn: 5 },
      { t: 'A', x: 515, y: 572, size: 215, turn: -12 },
      { t: '09:28', x: 890, y: 768, size: 118, turn: -15 },
    ],
  },
]
</script>

<template>
  <div class="page">
    <svg class="wallpaper" viewBox="0 0 966 2048" preserveAspectRatio="xMidYMin slice" aria-hidden="true">
      <g v-for="(tile, i) in tiles" :key="i" :transform="`translate(${tile.x} ${tile.y}) scale(0.33333)`">
        <circle v-for="(d, k) in tile.dots" :key="`d${k}`" :cx="d[0]" :cy="d[1]" :r="d[2]" />
        <path v-for="(p, k) in tile.paths" :key="`p${k}`" :d="p" />
        <path
          v-for="(s, k) in tile.stars"
          :key="`s${k}`"
          :d="star"
          :transform="`translate(${s[0]} ${s[1]}) rotate(${s[3]}) scale(${s[2] / 100})`"
        />
        <path
          v-for="(s, k) in tile.sparks"
          :key="`k${k}`"
          :d="spark"
          :transform="`translate(${s[0]} ${s[1]}) rotate(${s[3]}) scale(${s[2] / 100})`"
        />
        <text
          v-for="(w, k) in tile.words"
          :key="`w${k}`"
          :font-size="w.size"
          :transform="`translate(${w.x} ${w.y}) rotate(${w.turn})`"
        >{{ w.t }}</text>
      </g>
    </svg>

    <header class="topbar">
      <button class="bar-button" type="button" aria-label="Voltar">
        <svg width="40" height="40" viewBox="0 0 40 40"><path d="M39 20H4M21 3L4 20L21 37" fill="none" stroke="#fff" stroke-width="5" /></svg>
      </button>
      <span class="avatar"></span>
      <button class="bar-button more" type="button" aria-label="Mais opções">
        <svg width="10" height="40" viewBox="0 0 10 40" fill="#fff"><circle cx="5" cy="6" r="5" /><circle cx="5" cy="20" r="5" /><circle cx="5" cy="34" r="5" /></svg>
      </button>
    </header>

    <div class="banner"><h1>DEPOIMENTO</h1></div>

    <main class="chat">
      <div class="date-chip"></div>
      <p class="notice">
        <svg class="lock" width="16" height="20" viewBox="0 0 16 20"><rect y="7" width="16" height="13" rx="2" fill="#ffd279" /><path d="M4 8V6A4 4 0 0 1 12 6V8" fill="none" stroke="#ffd279" stroke-width="2" /></svg>
        As mensagens e as chamadas são protegidas com a criptografia de ponta a ponta e ficam somente entre você e os participantes desta conversa. Nem mesmo o WhatsApp pode ler ou ouvi-las. Toque para saber mais.
      </p>

      <article class="bubble incoming">
        <svg class="tail" width="18" height="28" viewBox="0 0 18 28"><path d="M18 0H3Q-1 1 1 5L18 28Z" fill="#1f2c34" /></svg>
        <p v-for="line in incoming" :key="line">{{ line }}</p>
      </article>

      <article class="bubble outgoing">
        <svg class="tail" width="18" height="28" viewBox="0 0 18 28"><path d="M0 0H15Q19 1 17 5L0 25Z" fill="#005d4b" /></svg>
        <p v-for="line in outgoing" :key="line">{{ line }}</p>
        <span class="mark">,</span>
      </article>
    </main>

    <form class="composer" @submit.prevent>
      <div class="field">
        <button class="icon-button" type="button" aria-label="Emoji">
          <svg width="48" height="48" viewBox="0 0 48 48">
            <circle cx="24" cy="24" r="24" fill="#8696a0" />
            <g fill="#1f2c34"><ellipse cx="16" cy="17" rx="4" ry="5" /><ellipse cx="31" cy="17" rx="4" ry="5" /><path d="M8 26Q24 30 39 26Q37 40 24 40Q11 40 8 26Z" /></g>
            <path d="M12 30Q24 33 36 30Q34 34 24 34Q14 34 12 30Z" fill="#8696a0" />
          </svg>
        </button>
        <label class="entry">
          <span class="caret"></span>
          <input v-model="draft" type="text" placeholder="Mensagem" aria-label="Mensagem" />
        </label>
        <button class="icon-button" type="button" aria-label="Anexar">
          <svg width="50" height="46" viewBox="0 0 50 46"><path d="M27 5L44 22C54 33 39 48 28 39L5 17C-3 8 8 -3 17 4L36 23C43 31 35 34 29 29L14 15" fill="none" stroke="#8696a0" stroke-width="4" /></svg>
        </button>
        <button class="icon-button" type="button" aria-label="Câmera">
          <svg width="46" height="44" viewBox="0 0 46 44"><path d="M7 7H11L15 2Q17 0 19 0H27Q29 0 31 2L35 7H39Q46 7 46 14V36Q46 43 39 43H7Q0 43 0 36V14Q0 7 7 7Z" fill="#8696a0" /><circle cx="23" cy="23" r="10" fill="#8696a0" stroke="#1f2c34" stroke-width="4" /></svg>
        </button>
      </div>
      <button class="mic" type="button" aria-label="Gravar áudio">
        <svg width="34" height="48" viewBox="0 0 34 48"><rect x="10" width="14" height="29" rx="7" fill="#fff" /><path d="M2 22Q3 36 17 36Q31 36 32 22M17 36V48" fill="none" stroke="#fff" stroke-width="4" /></svg>
      </button>
    </form>
  </div>
</template>

<style>
body {
  margin: 0;
  background: #071319;
}
</style>

<style scoped>
* {
  box-sizing: border-box;
}

.page {
  position: relative;
  display: flex;
  flex-direction: column;
  min-height: 100vh;
  overflow: hidden;
  background: #071319;
  color: #e9edef;
  font-family: Roboto, "Liberation Sans", sans-serif;
}

.wallpaper {
  position: absolute;
  inset: 0;
  width: 100%;
  height: 100%;
  fill: none;
  stroke: #19252b;
  stroke-width: 2px;
  stroke-linecap: round;
  stroke-linejoin: round;
}

.wallpaper * {
  vector-effect: non-scaling-stroke;
}

.wallpaper text {
  font-family: Roboto, "Noto Sans CJK SC", sans-serif;
  font-weight: 700;
}

button {
  display: flex;
  align-items: center;
  justify-content: center;
  flex: none;
  padding: 0;
  border: 0;
  background: none;
  cursor: pointer;
}

.topbar {
  position: relative;
  display: flex;
  align-items: center;
  height: 131px;
  padding: 0 46px 0 19px;
  background: #1f2c34;
}

.more {
  margin-left: auto;
}

.avatar {
  flex: none;
  width: 80px;
  height: 84px;
  margin-left: 9px;
  border-radius: 50%;
  background: linear-gradient(#77767c, #090d10 25%, #06161d);
}

.banner {
  position: absolute;
  top: 26px;
  left: 70px;
  right: 67px;
  z-index: 2;
  display: flex;
  align-items: center;
  justify-content: center;
  height: 171px;
  padding-bottom: 10px;
  border-radius: 44px;
  background: linear-gradient(90deg, #ffc107, #ffff00);
}

.banner h1 {
  margin: 0;
  color: #0c171c;
  font: 900 48px/64px Lato, sans-serif;
}

.chat {
  position: relative;
  display: flex;
  flex: 1;
  flex-direction: column;
  padding: 34px 37px;
}

.date-chip {
  align-self: center;
  width: 88px;
  height: 39px;
  border-radius: 16px;
  background: #1c272e;
}

.notice {
  margin: 25px 52px 24px;
  padding: 16px 20px 14px;
  border-radius: 18px;
  background: #1c272d;
  color: #efce8b;
  font-size: 27px;
  line-height: 31px;
  text-align: center;
}

.lock {
  margin-right: 4px;
}

.bubble {
  position: relative;
  padding: 14px 24px 19px;
  border-radius: 24px;
  font-size: 33px;
  line-height: 39px;
}

.bubble p {
  margin: 0;
}

.incoming {
  margin-right: 95px;
  border-top-left-radius: 0;
  background: #1f2c34;
}

.outgoing {
  margin: 25px 0 0 95px;
  border-top-right-radius: 0;
  background: #005d4b;
}

.tail {
  position: absolute;
  top: 0;
}

.incoming .tail {
  right: 100%;
  margin-right: -1px;
}

.outgoing .tail {
  left: 100%;
  margin-left: -1px;
}

.mark {
  position: absolute;
  right: 21px;
  bottom: 28px;
  font-size: 20px;
  line-height: 24px;
  color: #8fc0b4;
}

.composer {
  position: relative;
  display: flex;
  align-items: center;
  gap: 12px;
  padding: 0 10px 11px 11px;
}

.field {
  display: flex;
  flex: 1;
  align-items: center;
  gap: 27px;
  min-width: 0;
  height: 107px;
  padding: 0 27px;
  border-radius: 54px;
  background: #1f2c34;
}

.field .icon-button:last-child {
  margin-left: 27px;
}

.entry {
  position: relative;
  flex: 1;
  min-width: 0;
}

.entry input {
  width: 100%;
  padding: 2px 0 0 1px;
  border: 0;
  outline: 0;
  background: none;
  color: #e9edef;
  font: 38px/52px Roboto, sans-serif;
}

.entry input::placeholder {
  color: #84939c;
  opacity: 1;
}

.caret {
  position: absolute;
  top: 0;
  left: 0;
  width: 6px;
  height: 52px;
  background: #14a583;
}

.mic {
  width: 110px;
  height: 110px;
  border-radius: 50%;
  background: #00a884;
}
</style>
